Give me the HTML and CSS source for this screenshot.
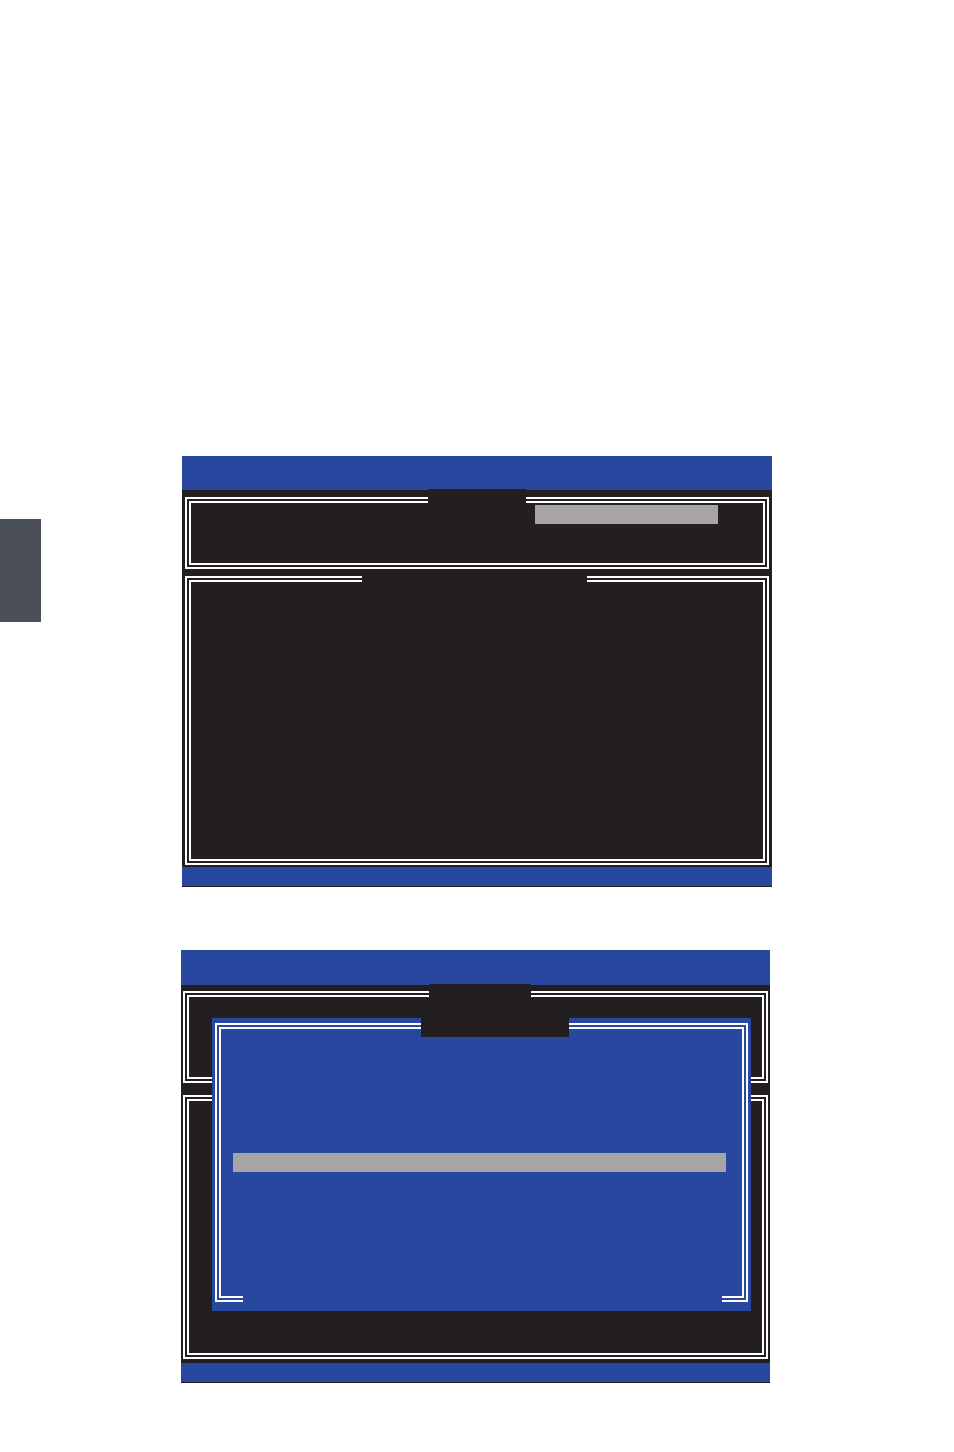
FILE: index.html
```html
<!DOCTYPE html>
<html lang="en">
<head>
    <meta charset="UTF-8">
    <meta name="viewport" content="width=device-width, initial-scale=1.0">
    <title>RAID Setup Screens</title>
    <link rel="stylesheet" href="styles.css">
</head>
<body>
    <!-- chapter thumb index on the page edge -->
    <div class="side-tab"></div>

    <div class="manual">
        <!-- main menu screen -->
        <div class="screen screen-main">
            <div class="screen-head"></div>
            <div class="screen-body">
                <div class="frame frame-info">
                    <div class="frame-tab tab-info"></div>
                    <div class="highlight highlight-info"></div>
                </div>
                <div class="frame frame-list">
                    <div class="frame-tab tab-list"></div>
                </div>
            </div>
            <div class="screen-foot"></div>
        </div>

        <!-- create volume dialog -->
        <div class="screen screen-dialog">
            <div class="screen-head"></div>
            <div class="screen-body">
                <div class="frame frame-info">
                    <div class="frame-tab tab-info"></div>
                </div>
                <div class="frame frame-list"></div>

                <div class="dialog">
                    <div class="dialog-frame">
                        <div class="highlight highlight-dialog"></div>
                        <div class="dialog-gap"></div>
                    </div>
                    <div class="dialog-tab"></div>
                </div>
            </div>
            <div class="screen-foot"></div>
        </div>
    </div>
</body>
</html>
```

FILE: styles.css
```css
* {
    box-sizing: border-box;
}

body {
    margin: 0;
    background: #fff;
    font-family: 'Liberation Sans', Arial, sans-serif;
    display: flex;
    align-items: flex-start;
    min-height: 1452px;
}

.side-tab {
    width: 41px;
    height: 103px;
    margin-top: 519px;
    background: #4b4f58;
    flex-shrink: 0;
}

.manual {
    padding-top: 456px;
    display: flex;
    flex-direction: column;
}

/* bios screen */
.screen {
    background: #231f20;
}

.screen-head {
    background: #2848a0;
}

.screen-body {
    position: relative;
    display: flex;
    flex-direction: column;
}

.screen-foot {
    height: 20px;
    background: #2848a0;
    border-bottom: 1px solid #231f20;
}

.frame {
    position: relative;
    border: 6px double #fff;
}

.frame-tab {
    position: absolute;
    background: #231f20;
}

.highlight {
    background: #a6a4a5;
    height: 19px;
}

/* first screen */
.screen-main {
    width: 590px;
    margin-left: 141px;
}

.screen-main .screen-head {
    height: 34px;
}

.screen-main .screen-body {
    padding: 7px 3px 2px;
}

.screen-main .frame-info {
    height: 72px;
}

.screen-main .frame-list {
    height: 289px;
    margin-top: 7px;
}

.screen-main .tab-info {
    left: 237px;
    top: -14px;
    width: 98px;
    height: 15px;
}

.tab-list {
    left: 171px;
    top: -7px;
    width: 225px;
    height: 8px;
}

.highlight-info {
    width: 183px;
    margin: 2px 0 0 344px;
}

/* second screen */
.screen-dialog {
    width: 589px;
    margin-left: 140px;
    margin-top: 63px;
}

.screen-dialog .screen-head {
    height: 35px;
}

.screen-dialog .screen-body {
    padding: 6px 2px 4px;
}

.screen-dialog .frame-info {
    height: 92px;
}

.screen-dialog .frame-list {
    height: 264px;
    margin-top: 12px;
}

.screen-dialog .tab-info {
    left: 240px;
    top: -13px;
    width: 102px;
    height: 29px;
}

.dialog {
    position: absolute;
    top: 33px;
    left: 31px;
    width: 539px;
    height: 293px;
    background: #2848a0;
    padding: 5px 3px 9px 3px;
}

.dialog-frame {
    position: relative;
    height: 100%;
    border: 6px double #fff;
    padding-top: 124px;
}

.dialog-gap {
    position: absolute;
    left: 22px;
    bottom: -7px;
    width: 479px;
    height: 8px;
    background: #2848a0;
}

.dialog-tab {
    position: absolute;
    left: 209px;
    top: 0;
    width: 148px;
    height: 19px;
    background: #231f20;
}

.highlight-dialog {
    width: 493px;
    margin-left: 12px;
}
```
